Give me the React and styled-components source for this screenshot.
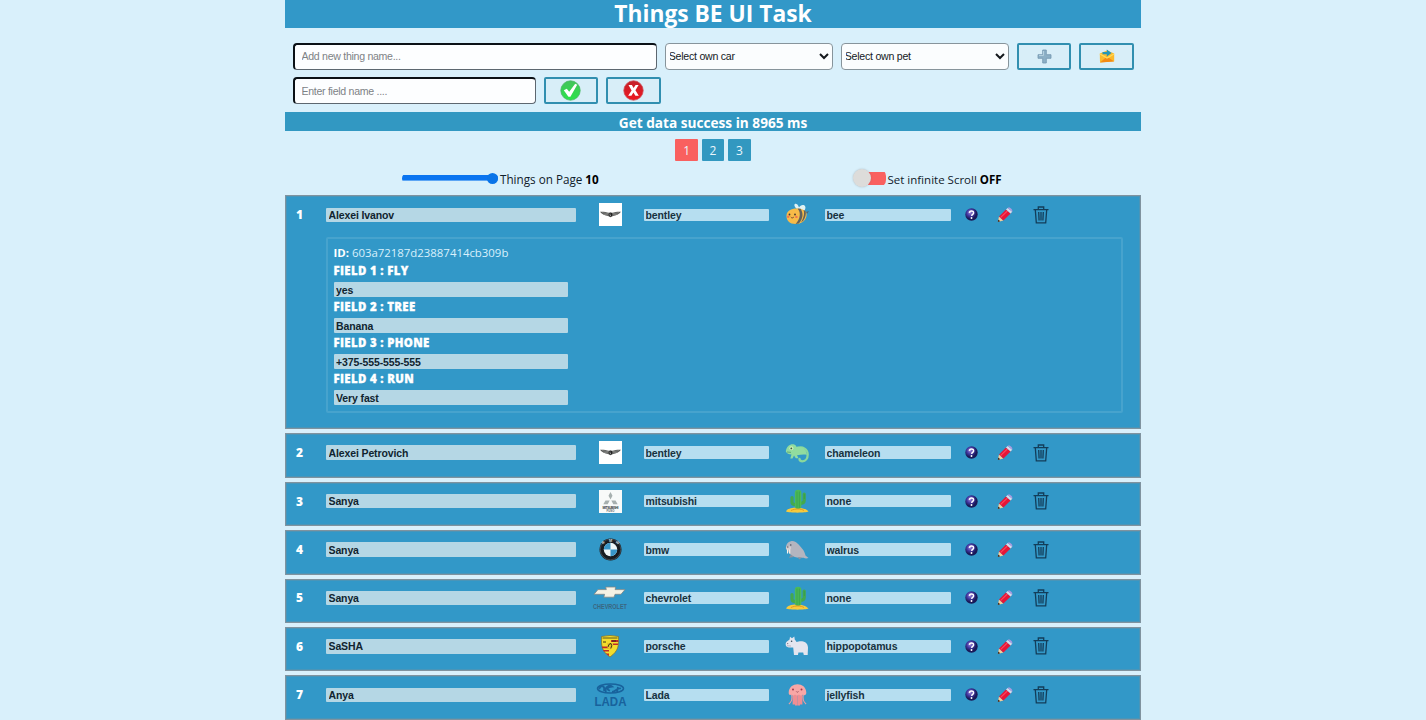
import React from 'react';
import styled, { createGlobalStyle, css } from 'styled-components';

const ui = '"Open Sans", "Noto Sans", sans-serif';
const arial = '"Liberation Sans", Arial, sans-serif';

const GlobalStyle = createGlobalStyle`
  * { box-sizing: border-box; }
  html, body { margin: 0; height: 100%; overflow: hidden; background: #d9f0fb; }
  svg { overflow: visible; flex: none; }
`;

const Page = styled.main`
  width: 856px;
  height: 720px;
  overflow: hidden;
  margin-left: 285px;
  font-family: ${ui};
  color: #10202a;
`;

const Title = styled.h1`
  margin: 0;
  height: 27.5px;
  background: #3298c8;
  color: #fff;
  text-align: center;
  font-size: 22.8px;
  line-height: 27px;
  font-weight: 700;
  white-space: nowrap;
`;

const Toolbar = styled.div`
  display: flex;
  gap: 8px;
  height: 27px;
  padding-left: 7.5px;
  margin-top: ${(p) => p.$top}px;
`;

const TextBox = styled.input`
  width: ${(p) => p.$w}px;
  height: 27px;
  border: 2px solid;
  border-color: #0b1116 #5d6770 #5d6770 #0b1116;
  border-width: 2px 1px 1px 2px;
  border-radius: 4px;
  background: #fdfeff;
  padding: 0 7px 1px;
  font: 10.6px ${arial};
  letter-spacing: -0.3px;
  outline: none;
  &::placeholder { color: #7d8286; opacity: 1; }
`;

const Select = styled.select`
  width: 168px;
  height: 27px;
  border: 1px solid #87949b;
  border-radius: 4px;
  background: #fbfdfe;
  color: #14191d;
  font: 10.6px ${arial};
  letter-spacing: -0.25px;
  padding: 0;
  text-indent: -1px;
`;

const ActionButton = styled.button`
  width: 54.5px;
  height: 27px;
  padding: 0;
  display: flex;
  align-items: center;
  justify-content: center;
  border: 2px solid #318fb0;
  border-radius: 2px;
  background: #d8eef8;
`;

const Status = styled.div`
  margin-top: 7.5px;
  height: 19.5px;
  background: #3298c2;
  color: #fff;
  text-align: center;
  font-size: 13.65px;
  line-height: 21px;
  font-weight: 700;
`;

const Pager = styled.nav`
  display: flex;
  justify-content: center;
  gap: 4px;
  margin-top: 7.5px;
`;

const PageButton = styled.button`
  width: 22.4px;
  height: 22.4px;
  border: 0;
  border-radius: 1px;
  padding: 1px 0 0;
  font: 12px ${ui};
  color: #e9f6fc;
  background: ${(p) => (p.$active ? '#f9605f' : '#3298c0')};
`;

const Settings = styled.div`
  display: flex;
  height: 34.6px;
`;

const Setting = styled.label`
  display: flex;
  align-items: center;
  padding: 2px 0 0 ${(p) => p.$left}px;
  width: ${(p) => p.$w}px;
  font-size: ${(p) => p.$size}px;
  white-space: nowrap;
  b { color: #000; margin-left: 3px; }
`;

const Range = styled.input`
  appearance: none;
  width: 96px;
  height: 11px;
  margin: 0 2px 2px 0;
  background: linear-gradient(#0a74f0, #0a74f0) center / 100% 5.6px no-repeat;
  border-radius: 6px;
  &::-webkit-slider-thumb {
    appearance: none;
    width: 11px;
    height: 11px;
    border-radius: 50%;
    background: #0a74e8;
  }
`;

const Switch = styled.span`
  width: 33px;
  height: 18px;
  display: flex;
  align-items: center;
  margin: 0 2px 2px 0;
  background: linear-gradient(#f9605f, #f9605f) right center / 28px 13px no-repeat;
  border-radius: 0 7px 7px 0;
  &::before {
    content: '';
    width: 18px;
    height: 18px;
    border-radius: 50%;
    background: #dddcda;
    box-shadow: 0 0 2px rgba(90, 90, 90, 0.35);
  }
`;

const List = styled.section`
  display: flex;
  flex-direction: column;
  gap: 4px;
`;

const Card = styled.article`
  height: ${(p) => (p.$open ? 233.8 : 44.45)}px;
  flex: none;
  border: 1px solid #80939f;
  box-shadow: inset 0 0 0 1px #4a95b8;
  background: #3298c8;
`;

const Row = styled.div`
  display: grid;
  grid-template-columns: 40px 250px 68px 125px 56px 126px 41.500px 25px 46px;
  align-items: center;
  height: 36.8px;
`;

const Num = styled.span`
  padding: 1px 0 0 10px;
  color: #fff;
  font-size: 12px;
  line-height: 16px;
  font-weight: 800;
`;

const field = css`
  display: block;
  border: 0;
  border-radius: 1px;
  outline: none;
  margin: 0;
  font: 700 10.5px ${arial};
  letter-spacing: -0.12px;
  color: #17323f;
`;

const NameField = styled.input`
  ${field}
  width: ${(p) => p.$w || 250}px;
  height: 14.5px;
  padding: 0 2.5px;
  background: #b5d7e5;
  color: #10242f;
`;

const TagField = styled.input`
  ${field}
  width: 100%;
  height: 12.6px;
  padding: 0 1.5px;
  background: #b6def0;
`;

const Cell = styled.span`
  display: flex;
  justify-content: center;
  align-items: center;
`;

const Details = styled.div`
  margin: 3.6px 0 0 40px;
  width: 797px;
  height: 176px;
  padding: 5.5px 0 0 5.5px;
  border: 2px solid #47a3cd;
  border-radius: 2px;
  color: #fff;
`;

const IdLine = styled.div`
  height: 18px;
  font-size: 11.4px;
  line-height: 17px;
  color: #d8f0fc;
  b { color: #fff; }
`;

const FieldLabel = styled.div`
  height: 20px;
  font-size: 11.4px;
  line-height: 18px;
  font-weight: 800;
  letter-spacing: 0.35px;
  -webkit-text-stroke: 0.3px #fff;
  text-transform: uppercase;
`;

const FieldGroup = styled.div`
  height: 36px;
`;

const CheckIcon = () => (
  <svg width="21" height="21" viewBox="0 0 21 21">
    <defs><linearGradient id="g1" x2="0" y2="1"><stop stopColor="#43c35b" /><stop offset="1" stopColor="#2be34a" /></linearGradient></defs>
    <circle cx="10.5" cy="10.5" r="9.7" fill="url(#g1)" stroke="#48b765" strokeWidth=".8" />
    <path d="M3.800 10.300l3-1.500 2.400 3 6-8 2 1-6.800 12h-2z" fill="#fff" />
  </svg>
);

const CrossIcon = () => (
  <svg width="21" height="21" viewBox="0 0 21 21">
    <defs><linearGradient id="g2" x2="0" y2="1"><stop stopColor="#c3222b" /><stop offset="1" stopColor="#ee1620" /></linearGradient></defs>
    <circle cx="10.5" cy="10.5" r="9.7" fill="url(#g2)" stroke="#ce4c55" strokeWidth=".8" />
    <path d="M5.500 5h3.400l1.700 3 2-3h3l-3.200 5.200 3.400 5.600h-3.400l-2-3.300-2 3.300H5.200l3.400-5.400z" fill="#fff" />
  </svg>
);

const PlusIcon = () => (
  <svg width="15" height="15" viewBox="0 0 15 15">
    <path d="M5.700 1h3.600v4.700H14v3.600H9.300V14H5.700V9.300H1V5.700h4.700z" fill="#8cb0c6" stroke="#7296ae" strokeWidth=".8" />
    <path d="M6.500 2v4.500H2" stroke="#b4d0df" fill="none" />
  </svg>
);

const MailIcon = () => (
  <svg width="16" height="16" viewBox="0 0 16 16">
    <path d="M.8 5.500L8 2.600l7.200 2.900v7.800L1 14.600z" fill="#fbb92c" />
    <path d="M1 14.400L8 8.500l7.200 4.900z" fill="#f38a14" />
    <path d="M1 6l7 4 7-4" fill="none" stroke="#ffdc57" strokeWidth="1.300" />
    <path d="M3.500 4h4.300V1.500l4.700 3.500-4.700 3.400V6.200H3.500z" fill="#2596b5" />
  </svg>
);

const Help = () => (
  <svg width="13" height="13" viewBox="0 0 13 13">
    <defs><radialGradient id="q" cx=".4" cy=".35"><stop stopColor="#9d86d8" /><stop offset=".55" stopColor="#4237a0" /><stop offset="1" stopColor="#191958" /></radialGradient></defs>
    <circle cx="6.500" cy="6.500" r="6.200" fill="url(#q)" />
    <path d="M4.400 4.900c.1-2.700 4.300-2.600 4.200 0 0 1.400-1.900 1.400-2 3" fill="none" stroke="#fff" strokeWidth="1.500" />
    <circle cx="6.500" cy="10" r=".95" fill="#fff" />
  </svg>
);

const Pencil = () => (
  <svg width="16" height="17" viewBox="0 0 16 17">
    <path d="M.8 16L2 10.500l4.400 4z" fill="#f3cf9b" />
    <path d="M.8 16l.5-2.400 1.900 1.700z" fill="#33231d" />
    <path d="M2 10.500L9 3.500l4.600 4-7.200 7z" fill="#e61637" />
    <path d="M3.500 11.600l7-6.800" stroke="#fb4a60" strokeWidth="1.100" />
    <path d="M9 3.500l1.700-1.600 4.500 3.900-1.600 1.700z" fill="#d9dbe9" />
    <path d="M10.700 1.900c1.600-1.700 5.700 1.600 4.500 3.900z" fill="#ad9be0" />
  </svg>
);

const Trash = () => (
  <svg width="16" height="18" viewBox="0 0 16 18" fill="none" stroke="#133d59" strokeWidth="1.300">
    <path d="M.5 3.600h15M5.300 3.400V1h5.400v2.400M2.300 3.800l1 13h9.400l1-13M5.700 6l.4 8.500M8 6v8.500M10.300 6l-.4 8.500" />
  </svg>
);

const Bentley = () => (
  <svg width="23" height="23" viewBox="0 0 23 23">
    <path fill="#fff" d="M0 0h23v23H0z" />
    <path d="M1 8.700c3-.2 6.500.2 8.700 1.100h3.600c2.200-.9 5.700-1.300 8.700-1.100-2 2.600-5.200 4-8 4.200l-2.500 1.300L9 12.900c-2.800-.2-6-1.600-8-4.200z" fill="#565756" />
    <path d="M3 9.600l7 1.200M5 11.400l5 .5M20 9.600l-7 1.200M18 11.400l-5 .5" stroke="#a8a8a5" strokeWidth=".5" />
    <circle cx="11.500" cy="11.500" r="1.900" fill="#222" />
    <path d="M11 10.500v2h1" stroke="#ccc" strokeWidth=".6" fill="none" />
  </svg>
);

const Mitsubishi = () => (
  <svg width="23" height="23" viewBox="0 0 23 23">
    <path fill="#f8faf9" d="M0 0h23v23H0z" />
    <path d="M11.500 2l2 3.700-2 3.700-2-3.700zM10.700 10.500l-2 3.700H4.300l2.200-3.700zM12.300 10.500l2 3.700h4.400l-2.200-3.700z" fill="#a7b0af" />
    <text x="11.500" y="18.600" fontSize="3.300" fontWeight="700" fontFamily="Liberation Sans" textAnchor="middle" textLength="16" fill="#323c3d">MITSUBISHI</text>
    <text x="11.500" y="21.800" fontSize="2.800" fontWeight="700" fontFamily="Liberation Sans" textAnchor="middle" fill="#606b6c">FUSO</text>
  </svg>
);

const Bmw = () => (
  <svg width="23" height="23" viewBox="0 0 23 23">
    <circle cx="11.500" cy="11.500" r="11" fill="#161b20" />
    <circle cx="11.500" cy="11.500" r="10.300" fill="none" stroke="#5d6870" strokeWidth=".6" />
    <circle cx="11.500" cy="11.500" r="6.700" fill="#eef5f7" />
    <path d="M11.500 11.500V4.800A6.700 6.700 0 0 0 4.800 11.500zM11.500 11.500v6.700a6.700 6.700 0 0 0 6.700-6.700z" fill="#3896c8" />
    <g fill="#ccd5da" fontFamily="Liberation Sans" fontSize="3.800" fontWeight="700">
      <text x="3.600" y="6.200" transform="rotate(-38 4 6)">B</text><text x="9.900" y="4">M</text><text x="16" y="5" transform="rotate(38 17 5)">W</text>
    </g>
  </svg>
);

const Chevrolet = () => (
  <svg width="38" height="28" viewBox="-1 -2 38 28">
    <path d="M6 3.600h8.300L13.700 1h10l-.6 2.600H33l-4 4.700h-6l-1 2.900H11.800l.8-2.900H2z" fill="#f5f2e4" stroke="#7d8786" strokeWidth=".8" />
    <text x="18" y="23" textAnchor="middle" textLength="34" lengthAdjust="spacingAndGlyphs" fontFamily="Liberation Sans" fontWeight="700" fontSize="6.400" fill="#3a6681">CHEVROLET</text>
  </svg>
);

const Porsche = () => (
  <svg width="20" height="23" viewBox="0 0 20 23">
    <path d="M1.500 1.500Q10-.5 18.500 1.500c.2 9.500.3 14-8.500 20.500C1.300 15.500 1.300 11 1.500 1.500z" fill="#f3dd2d" stroke="#816b28" strokeWidth=".7" />
    <path d="M11 5h7.200v2H11zM11 8.500h7v1.500h-7zM2 11.500h7v1.700H2.200zM3 15h6v1.600H3.900zM5.500 18.400H9V21z" fill="#c02a2b" />
    <path d="M2.500 3h15" stroke="#514718" strokeWidth=".9" />
    <path d="M7 8h6v4l-3 3-3-3z" fill="#ecc629" />
    <path d="M8 12l1-2.700 2-.8.700 2-.9 3M12 6l4 0M3 7h3" fill="none" stroke="#2b2413" strokeWidth=".9" />
  </svg>
);

const Lada = () => (
  <svg width="33" height="26" viewBox="0 0 33 26">
    <ellipse cx="16.500" cy="6.500" rx="13" ry="4.600" fill="none" stroke="#18629c" strokeWidth="1.500" />
    <path d="M5 7c3-5 6-2.600 5 2M12 10c-2-6 4-7 6-5.500-5 .5-6 3-2 4.200M18 10c4 0 5-5 9-3.500M23 10l1-5" stroke="#18629c" strokeWidth="1.800" fill="none" />
    <text x="16.500" y="23.500" textAnchor="middle" textLength="32" lengthAdjust="spacingAndGlyphs" fontFamily="Liberation Sans" fontWeight="700" fontSize="12" fill="#18629c">LADA</text>
  </svg>
);

const Bee = () => (
  <svg width="25" height="23" viewBox="0 0 25 23">
    <path d="M12 6c-6-5 0-8 2-1.500 2-4.500 9-3 5.500 3z" fill="#e0f2f4" />
    <path d="M21 9l3-1-2 3z" fill="#536573" />
    <path d="M1.500 13C1.500 6.500 8 5 13 5.500c6 .5 9.500 3 8.500 7.500-1 5.500-6 8.200-11 8-6 0-9-3.500-9-8z" fill="#f8bb48" />
    <path d="M12.500 5.500c4 4 2.500 11-2 15.400l3.300-.4c4.500-5 4.700-10.500 1.800-14.800zM18.500 7c1.500 4-.2 8-2.300 12.300l2-1.600c2.300-3.600 3-6.500 2.500-9.500z" fill="#62625d" />
    <circle cx="4.500" cy="11.500" r=".9" fill="#453730" /><circle cx="10" cy="11.500" r=".9" fill="#453730" />
    <path d="M5.800 14c.8 1.200 2.200 1.200 3 0" fill="none" stroke="#714235" />
    <circle cx="3.200" cy="13.700" r="1.200" fill="#f2744e" /><circle cx="11.400" cy="13.900" r="1.200" fill="#f2744e" />
  </svg>
);

const Chameleon = () => (
  <svg width="24" height="20" viewBox="0 0 24 20">
    <path d="M12 5c6-2 10.700 1.500 10.700 6.500 0 4-2.200 6.800-5.200 6.800-2 0-3-1.200-3-2.300" fill="none" stroke="#8bd89b" strokeWidth="2.300" strokeLinecap="round" />
    <path d="M.8 8.500C1.500 3 5 .8 8.500 1.200 10.500 1.500 11 3 11.500 3.800c5.300-.8 10.300 2.500 10.300 8.200-3-1-6.300 0-9.800.2l1.500 3.100h-2.700L9 12.500l-1.500 3H5.300l1.200-4C4 11.200 1.600 10.500.8 8.500z" fill="#91dc9f" />
    <circle cx="6.400" cy="5.300" r="2" fill="#d2efb2" /><circle cx="6.300" cy="5.400" r=".9" fill="#355e49" />
    <path d="M2 9l4 .4" stroke="#4c9469" strokeWidth=".7" />
  </svg>
);

const Cactus = () => (
  <svg width="23" height="24" viewBox="0 0 23 24">
    <path d="M0 22.500c2-5.500 18-5.500 22.500 0-3 1.500-19 1.500-22.500 0z" fill="#f7ca3c" />
    <path d="M6 8.500v4.700c0 2 2 2.300 4 2.300M18.200 5v6.600c0 2.600-2 2.900-4.500 2.900" fill="none" stroke="#43a94e" strokeWidth="3.200" strokeLinecap="round" />
    <rect x="8.800" y=".8" width="6.600" height="19.200" rx="3.300" fill="#4dba57" />
    <path d="M11 2.500V19M13.300 2.500V19M18.300 5v5" stroke="#2f9747" strokeWidth=".6" />
    <path d="M5 21.500c4-2 10-2 13 0" stroke="#e29b22" fill="none" />
  </svg>
);

const Walrus = () => (
  <svg width="24" height="20" viewBox="0 0 24 20">
    <path d="M3 11C-.5 8.500 1 2 6 1.200c5-.9 7.500 3.500 11 7.300 2.300 2.500 3 5 3.500 7l3 2.500c-2 .7-3.700.5-4.800-.3C12 18.300 5 16.500 3 11z" fill="#b4b5bf" />
    <path d="M6 14.500l-2 3.300 5-.8zM13 17l1 2.400 3-1.600z" fill="#8e929f" />
    <ellipse cx="3.500" cy="8" rx="2.700" ry="2" fill="#d2ced0" />
    <path d="M2.500 9.500v4M4.700 9.500v4" stroke="#fbf5e9" strokeWidth="1.100" />
    <circle cx="5.800" cy="5" r=".7" fill="#3f4552" />
    <circle cx="2.800" cy="7" r=".8" fill="#655d68" />
  </svg>
);

const Hippo = () => (
  <svg width="24" height="20" viewBox="0 0 24 20">
    <path d="M.7 8.500C.5 5.600 3 5.200 4.600 3.500L5 .8l2 1.500L9.300.6l.5 3.200c1 .8 1.200 1.700 1.900 2.200C15 4.500 22.800 4.500 23 11.500l-.3 7.500h-3.900l-.6-2.600h-4.800L13 19H9l-.8-7.500C5 11.700 1 12 .7 8.500z" fill="#e3e5ef" />
    <circle cx="6.600" cy="5.200" r=".8" fill="#384959" /><circle cx="2.700" cy="7.600" r=".6" fill="#765f70" />
    <path d="M2 9.800l4 .2" stroke="#9d93a3" strokeWidth=".6" />
  </svg>
);

const Jelly = () => (
  <svg width="19" height="23" viewBox="0 0 19 23">
    <path d="M5.800 11v10.500M8.200 11v11.500M10.800 11v11.500M13.200 11v10.500" stroke="#ef8e93" strokeWidth="2.400" />
    <path d="M3.600 11c1.200 5-.2 8-2.700 10M15.400 11c-1.200 5 .2 8 2.700 10" fill="none" stroke="#f29da1" strokeWidth="1.100" />
    <path d="M.7 9.500C1-1.500 18-1.500 18.300 9.500c.1 3-2.500 3.200-3.300 2-1.600 1.500-3 1.300-4 0-1.200 1.500-2.800 1.300-4 0-1.500 1.500-2.600 1.300-3.500 0-1.300 1-2.900.6-2.800-2z" fill="#f8a7a6" />
    <circle cx="5" cy="6.500" r="1" fill="#a4394c" /><circle cx="13.500" cy="6.500" r="1" fill="#a4394c" />
    <path d="M8.300 8.500c.5.900 1.700.9 2.200 0" stroke="#8f3e4c" fill="none" strokeWidth=".8" />
  </svg>
);

const things = [
  ['Alexei Ivanov', Bentley, 'bentley', Bee, 'bee'],
  ['Alexei Petrovich', Bentley, 'bentley', Chameleon, 'chameleon'],
  ['Sanya', Mitsubishi, 'mitsubishi', Cactus, 'none'],
  ['Sanya', Bmw, 'bmw', Walrus, 'walrus'],
  ['Sanya', Chevrolet, 'chevrolet', Cactus, 'none'],
  ['SaSHA', Porsche, 'porsche', Hippo, 'hippopotamus'],
  ['Anya', Lada, 'Lada', Jelly, 'jellyfish'],
];

const fields = [['fly', 'yes'], ['tree', 'Banana'], ['phone', '+375-555-555-555'], ['run', 'Very fast']];

export default function App() {
  return (
    <>
      <GlobalStyle />
      <Page>
        <Title>Things BE UI Task</Title>
        <Toolbar $top={15}>
          <TextBox $w={364.3} placeholder="Add new thing name..." />
          <Select><option>Select own car</option></Select>
          <Select><option>Select own pet</option></Select>
          <ActionButton><PlusIcon /></ActionButton>
          <ActionButton><MailIcon /></ActionButton>
        </Toolbar>
        <Toolbar $top={7.5}>
          <TextBox $w={243} placeholder="Enter field name ...." />
          <ActionButton><CheckIcon /></ActionButton>
          <ActionButton><CrossIcon /></ActionButton>
        </Toolbar>
        <Status>Get data success in 8965 ms</Status>
        <Pager>
          <PageButton $active>1</PageButton>
          <PageButton>2</PageButton>
          <PageButton>3</PageButton>
        </Pager>
        <Settings>
          <Setting $left={117} $w={567.5} $size={11.7}>
            <Range type="range" min="1" max="10" defaultValue="10" />
            Things on Page <b>10</b>
          </Setting>
          <Setting $left={0} $w={200} $size={11.5}>
            <Switch />
            Set infinite Scroll <b>OFF</b>
          </Setting>
        </Settings>
        <List>
          {things.map(([name, Car, car, Pet, pet], i) => (
            <Card key={i} $open={i === 0}>
              <Row>
                <Num>{i + 1}</Num>
                <NameField readOnly value={name} />
                <Cell><Car /></Cell>
                <TagField readOnly value={car} />
                <Cell><Pet /></Cell>
                <TagField readOnly value={pet} />
                <Cell><Help /></Cell>
                <Cell><Pencil /></Cell>
                <Cell><Trash /></Cell>
              </Row>
              {i === 0 && (
                <Details>
                  <IdLine><b>ID:</b> 603a72187d23887414cb309b</IdLine>
                  {fields.map(([key, value], n) => (
                    <FieldGroup key={key}>
                      <FieldLabel>Field {n + 1} : {key}</FieldLabel>
                      <NameField $w={234.5} readOnly value={value} />
                    </FieldGroup>
                  ))}
                </Details>
              )}
            </Card>
          ))}
        </List>
      </Page>
    </>
  );
}
